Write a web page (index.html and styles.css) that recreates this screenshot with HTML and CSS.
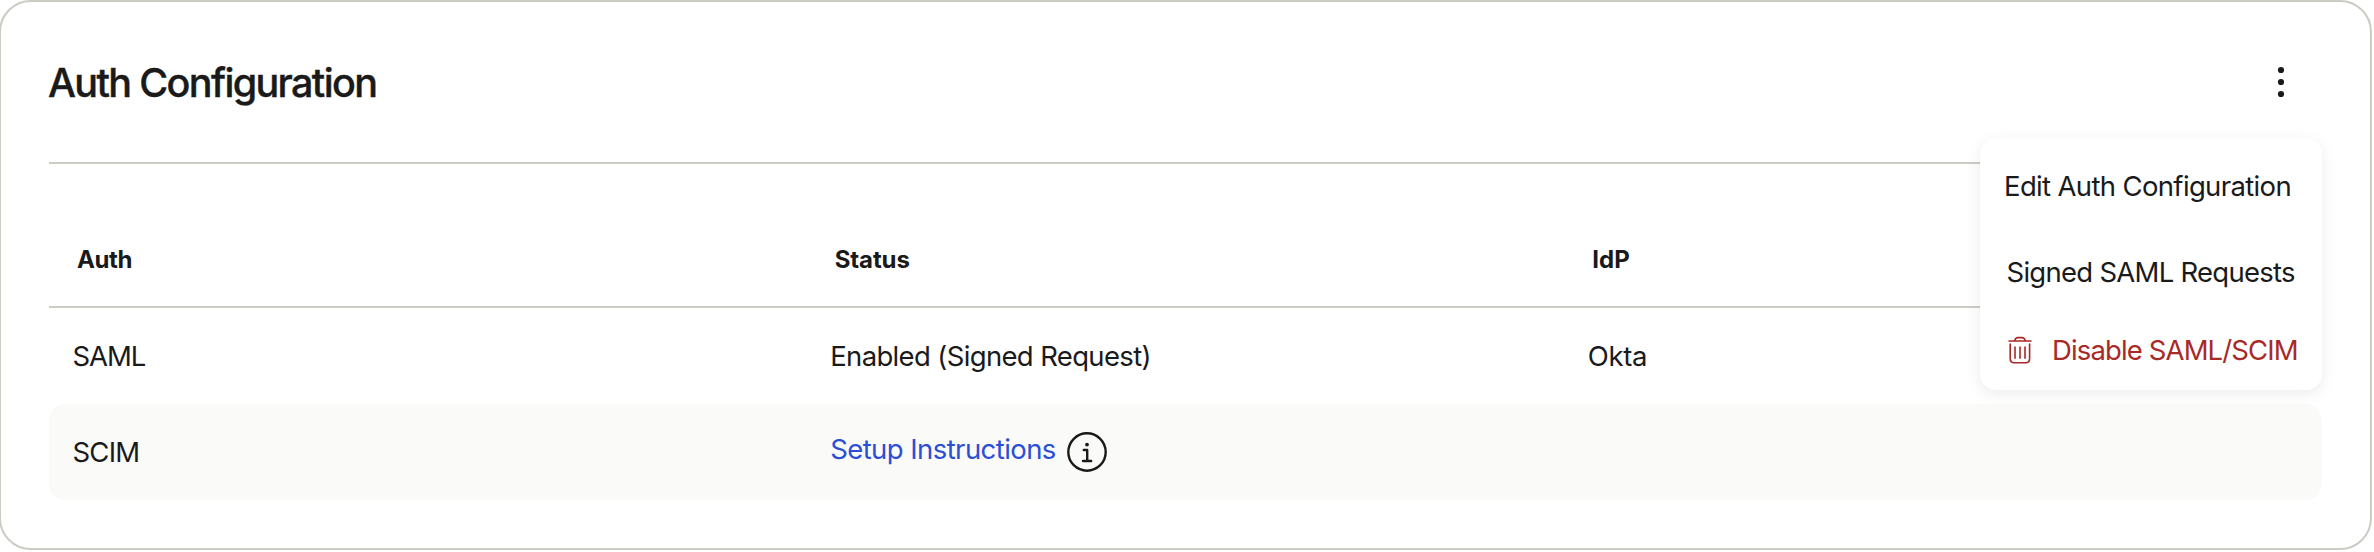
FILE: index.html
```html
<!DOCTYPE html>
<html lang="en">
<head>
<meta charset="utf-8">
<title>Auth Configuration</title>
<link rel="stylesheet" href="styles.css">
</head>
<body>
<section class="card">
  <header class="card-header">
    <h2 class="title">Auth Configuration</h2>
    <button class="more" aria-label="More options">
      <svg width="8" height="32" viewBox="0 0 8 32" fill="currentColor"><circle cx="4" cy="4" r="3.1"/><circle cx="4" cy="16" r="3.1"/><circle cx="4" cy="28" r="3.1"/></svg>
    </button>
    <div class="menu">
      <a class="item edit">Edit Auth Configuration</a>
      <a class="item signed">Signed SAML Requests</a>
      <a class="item disable">
        <svg width="24" height="28" viewBox="0 0 24 28" fill="none" stroke="currentColor" stroke-width="1.6" stroke-linecap="round" stroke-linejoin="round"><path d="M1 5H23M6.7 4.6C7.2 2.6 8.2 1.6 9.8 1.6H14C15.6 1.6 16.7 2.6 17.2 4.6"/><path d="M2.2 8V22.8Q2.2 26.7 6 26.7H18Q21.6 26.7 21.6 22.8V8"/><path d="M7 11V22.2M12 11V22.2M17 11V22.2"/></svg>
        <span>Disable SAML/SCIM</span>
      </a>
    </div>
  </header>
  <div class="row head">
    <div>Auth</div><div class="status">Status</div><div class="idp">IdP</div>
  </div>
  <div class="row">
    <div class="caps">SAML</div><div class="enabled">Enabled (Signed Request)</div><div class="okta">Okta</div>
  </div>
  <div class="row striped">
    <div class="scim">SCIM</div>
    <div class="setup"><a class="link">Setup Instructions</a>
      <svg width="40" height="40" viewBox="0 0 40 40" fill="none" stroke="currentColor" stroke-width="2.4" stroke-linecap="round" stroke-linejoin="round"><circle cx="20" cy="20" r="18.7"/><path d="M16.8 18H20.2V28.8M16 29H24.2"/><circle cx="20" cy="12.6" r="1.9" fill="currentColor" stroke="none"/></svg>
    </div>
    <div></div>
  </div>
</section>
</body>
</html>
```
FILE: styles.css
```css
* { box-sizing: border-box; }
body {
  margin: 0;
  background: #fff;
  color: #1a1a1a;
  font-family: Inter, "Liberation Sans", sans-serif;
  font-size: 27.5px;
  line-height: 34px;
  letter-spacing: -0.6px;
  overflow: hidden;
}
.card {
  width: 2373px;
  height: 550px;
  margin-left: -1px;
  padding: 0 48px;
  border: 2px solid #cbccc4;
  border-radius: 32px;
}
.card-header {
  position: relative;
  display: flex;
  justify-content: space-between;
  height: 162px;
  border-bottom: 2px solid #cbccc4;
}
.title {
  margin: 0 0 0 -1px;
  padding-top: 57px;
  font-size: 39.5px;
  line-height: 48px;
  font-weight: 550;
  letter-spacing: -1.65px;
  -webkit-text-stroke: 0.4px currentColor;
}
.more {
  align-self: flex-start;
  margin: 64px 37px 0 0;
  padding: 0;
  border: 0;
  background: none;
  color: inherit;
  line-height: 0;
}
.menu {
  position: absolute;
  z-index: 1;
  top: 136px;
  right: 0;
  width: 342px;
  height: 252px;
  padding-top: 31px;
  background: #fff;
  border-radius: 16px;
  box-shadow: 0 4px 16px rgba(0, 0, 0, 0.08);
}
.item {
  display: flex;
  align-items: center;
  height: 34px;
  white-space: nowrap;
}
.edit { padding-left: 24px; letter-spacing: -0.65px; }
.signed { padding-left: 26.5px; margin-top: 52px; letter-spacing: -0.73px; }
.disable {
  padding-left: 28px;
  margin-top: 44px;
  gap: 20px;
  color: #a82a27;
  letter-spacing: -0.87px;
}
.row {
  display: grid;
  grid-template-columns: repeat(3, 1fr);
  align-items: center;
  height: 96px;
}
.row > div { padding-left: 23.5px; }
.caps { letter-spacing: -1.1px; }
.scim { letter-spacing: -0.8px; }
.enabled { letter-spacing: -0.65px; }
.okta { letter-spacing: -0.4px; }
.head {
  height: 144px;
  padding-top: 50px;
  border-bottom: 2px solid #cbccc4;
  font-size: 24px;
  font-weight: 700;
  letter-spacing: -0.4px;
}
.row.head > div { padding-left: 28px; }
.head .status { letter-spacing: -0.1px; }
.head .idp { letter-spacing: 0; }
.striped {
  background: #fafaf8;
  border-radius: 16px;
}
.setup {
  display: flex;
  align-items: center;
  gap: 11px;
}
.link {
  margin-top: -6px;
  color: #2a4fd6;
  letter-spacing: -0.57px;
}
```
